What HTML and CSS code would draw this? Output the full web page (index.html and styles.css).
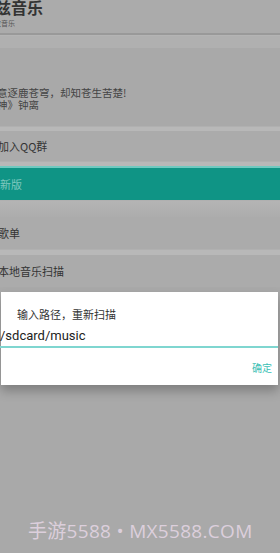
FILE: index.html
```html
<!DOCTYPE html>
<html lang="zh">
<head>
<meta charset="utf-8">
<link rel="stylesheet" href="styles.css">
</head>
<body>
<div class="screen">
  <header class="appbar">
    <div class="title">兹音乐</div>
    <div class="subtitle">改音乐</div>
  </header>
  <div class="appbar-line"></div>
  <div class="band"></div>
  <section class="quote">
    <p>意逐鹿苍穹，却知苍生苦楚!</p>
    <p>神》钟离</p>
  </section>
  <div class="sep"></div>
  <div class="row">加入QQ群</div>
  <div class="sep"></div>
  <div class="row teal">新版</div>
  <div class="sep tall"></div>
  <div class="row big">歌单</div>
  <div class="sep wide"></div>
  <div class="row big">本地音乐扫描</div>
  <div class="rest"></div>
  <div class="watermark">手游5588 • MX5588.COM</div>

  <div class="dialog">
    <div class="dialog-title">输入路径，重新扫描</div>
    <div class="dialog-input">/sdcard/music</div>
    <div class="dialog-actions"><span class="ok">确定</span></div>
  </div>
</div>
</body>
</html>
```

FILE: styles.css
```css
html, body {
  margin: 0;
  padding: 0;
  width: 280px;
  height: 553px;
  overflow: hidden;
  background: #a9a9a9;
  font-family: "Noto Sans CJK SC", "Noto Sans", sans-serif;
}
.screen {
  position: relative;
  width: 280px;
  height: 553px;
  display: flex;
  flex-direction: column;
  background: #a9a9a9;
}
.appbar {
  height: 33px;
  background: #ababab;
  display: flex;
  flex-direction: column;
  margin-left: -5px;
}
.title {
  font-size: 16px;
  font-weight: 700;
  color: #333;
  line-height: 16px;
  margin-top: -1px;
}
.subtitle {
  font-size: 7px;
  color: #555;
  line-height: 9px;
  margin-top: 4px;
  margin-left: -1px;
}
.appbar-line {
  height: 2px;
  background: #999;
}
.band {
  height: 12px;
  background: #b0b0b0;
  border-top: 1px solid #b4b4b4;
}
.quote {
  padding-top: 39px;
  height: 78px;
  box-sizing: border-box;
  margin-left: -3px;
  display: flex;
  flex-direction: column;
  gap: 0;
}
.quote p {
  margin: 0;
  font-size: 10.5px;
  line-height: 12px;
  color: #444;
}
.sep {
  height: 4px;
  background: #b8b8b8;
  border-top: 1px solid #b0b0b0;
}
.sep.wide {
  height: 5px;
}
.sep.tall {
  height: 16px;
  background: linear-gradient(#b4b4b4, #acacac);
}
.row {
  height: 30px;
  display: flex;
  align-items: center;
  font-size: 11px;
  color: #333;
  background: #ababab;
  margin-left: -2px;
}
.row.big {
  height: 32px;
}
.row.teal {
  height: 32px;
  background: #0f9485;
  color: #7fc8bf;
  border-top: 2px solid #6fc9c0;
  margin-left: 0;
}
.rest {
  flex: 1;
  background: #a9a9a9;
}
.watermark {
  position: absolute;
  left: 28px;
  top: 516px;
  font-family: "Open Sans", "Noto Sans CJK SC", sans-serif;
  font-size: 19px;
  letter-spacing: 0.3px;
  color: #dccfdc;
  white-space: nowrap;
}
.dialog {
  position: absolute;
  left: 1px;
  top: 292px;
  width: 277px;
  height: 93px;
  background: #fff;
  box-shadow: 0 6px 10px rgba(0,0,0,0.25);
  display: flex;
  flex-direction: column;
}
.dialog-title {
  padding: 15px 0 0 16px;
  font-size: 11px;
  line-height: 14px;
  color: #333;
}
.dialog-input {
  margin-top: 7px;
  margin-left: -1px;
  font-family: "Roboto", "Noto Sans", sans-serif;
  font-size: 13px;
  line-height: 16px;
  color: #222;
  border-bottom: 2px solid #7fd6d0;
  padding-bottom: 2px;
}
.dialog-actions {
  flex: 1;
  display: flex;
  justify-content: flex-end;
  align-items: center;
  padding-right: 6px;
  padding-top: 2px;
}
.ok {
  font-size: 10px;
  color: #3bbfb5;
}
```
